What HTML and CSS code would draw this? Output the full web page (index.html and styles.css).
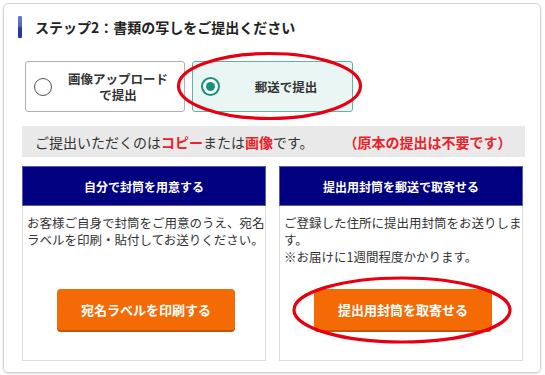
FILE: index.html
```html
<!DOCTYPE html>
<html lang="ja">
<head>
<meta charset="utf-8">
<link rel="stylesheet" href="styles.css">
</head>
<body>
<div class="card">
  <h2 class="title"><span class="accent"></span>ステップ2：書類の写しをご提出ください</h2>

  <div class="choices">
    <label class="choice">
      <span class="radio"></span>
      <span class="choice-text">画像アップロード<br>で提出</span>
    </label>
    <label class="choice selected">
      <span class="radio on"></span>
      <span class="choice-text">郵送で提出</span>
    </label>
  </div>

  <div class="notice">ご提出いただくのは<b class="red">コピー</b>または<b class="red">画像</b>です。<strong class="red note-strong">（原本の提出は不要です）</strong></div>

  <div class="columns">
    <section class="col">
      <h3 class="col-head">自分で封筒を用意する</h3>
      <div class="col-body">
        <p class="col-text">お客様ご自身で封筒をご用意のうえ、宛名<br>ラベルを印刷・貼付してお送りください。</p>
        <a class="btn">宛名ラベルを印刷する</a>
      </div>
    </section>
    <section class="col">
      <h3 class="col-head">提出用封筒を郵送で取寄せる</h3>
      <div class="col-body">
        <p class="col-text">ご登録した住所に提出用封筒をお送りしま<br>す。<br>※お届けに1週間程度かかります。</p>
        <a class="btn">提出用封筒を取寄せる</a>
      </div>
    </section>
  </div>

  <svg class="marks" width="545" height="375" viewBox="0 0 545 375">
    <ellipse cx="269.5" cy="86" rx="91" ry="32.5" fill="none" stroke="#e60012" stroke-width="3.2"/>
    <ellipse cx="402" cy="310" rx="108" ry="32" fill="none" stroke="#e60012" stroke-width="3.2"/>
  </svg>
</div>
</body>
</html>
```

FILE: styles.css
```css
* { box-sizing: border-box; }
html, body {
  margin: 0;
  padding: 0;
  background: #fff;
}
body {
  font-family: "Noto Sans CJK JP", "Noto Sans", sans-serif;
  color: #333;
}
.card {
  position: relative;
  margin: 3px;
  width: 538px;
  height: 370px;
  border: 1px solid #d2d2d2;
  border-radius: 5px;
  box-shadow: 0 1px 2px rgba(0,0,0,0.12);
  padding: 12px 15px 0 18px;
}
.title {
  display: flex;
  align-items: center;
  margin: 0 0 0 -4px;
  height: 22px;
  font-size: 14px;
  font-weight: bold;
  color: #222;
}
.accent {
  width: 4px;
  height: 22px;
  margin-right: 13px;
  border-radius: 1px;
  background: linear-gradient(#6d7bd0, #5566c2 45%, #2a3aa8 55%, #23339f);
}
.choices {
  display: flex;
  gap: 7px;
  margin: 23px 0 0 3px;
}
.choice {
  display: flex;
  align-items: center;
  width: 160px;
  height: 51px;
  padding-left: 8px;
  border: 1px solid #b0b0b0;
  border-radius: 3px;
  background: #fff;
}
.choice.selected {
  width: 161px;
  border-color: #5fb3a7;
  background: #e9f6f3;
}
.radio {
  flex: none;
  width: 18px;
  height: 18px;
  border: 1.5px solid #555;
  border-radius: 50%;
  background: #fff;
  display: flex;
  align-items: center;
  justify-content: center;
}
.radio.on {
  width: 19px;
  height: 19px;
  border: 2px solid #15917e;
}
.radio.on::after {
  content: "";
  width: 9px;
  height: 9px;
  border-radius: 50%;
  background: #15917e;
}
.choice-text {
  flex: 1;
  text-align: center;
  font-size: 12.5px;
  font-weight: bold;
  line-height: 16px;
  color: #333;
}
.notice {
  margin-top: 14px;
  height: 31px;
  display: flex;
  align-items: center;
  padding-left: 13px;
  background: #e9e9e9;
  font-size: 14px;
  color: #333;
  white-space: nowrap;
}
.red { color: #e8232b; font-weight: bold; }
.note-strong { margin-left: 30px; }
.columns {
  display: grid;
  grid-template-columns: 244px 244px;
  gap: 13px;
  margin-top: 9px;
}
.col {
  height: 195px;
  display: flex;
  flex-direction: column;
  border: 1px solid #dcdcdc;
  border-top: none;
}
.col-head {
  margin: 0 -1px;
  height: 40px;
  display: flex;
  align-items: center;
  justify-content: center;
  background: #000080;
  border: 1px solid #5a5aa8;
  color: #fff;
  font-size: 12px;
  font-weight: bold;
}
.col-body {
  flex: 1;
  display: flex;
  flex-direction: column;
  align-items: center;
  padding: 8px 0 30px 4px;
}
.col-text {
  align-self: stretch;
  margin: 0;
  font-size: 12.5px;
  line-height: 17px;
  color: #333;
  white-space: nowrap;
}
.btn {
  margin-top: auto;
  width: 178px;
  height: 41px;
  display: flex;
  align-items: center;
  justify-content: center;
  background: #f46b05;
  border-radius: 4px;
  box-shadow: 0 2px 0 #c85600;
  color: #fff;
  font-size: 13px;
  font-weight: bold;
  text-decoration: none;
}
.marks {
  position: absolute;
  left: -4px;
  top: -4px;
  pointer-events: none;
  overflow: visible;
}
```
